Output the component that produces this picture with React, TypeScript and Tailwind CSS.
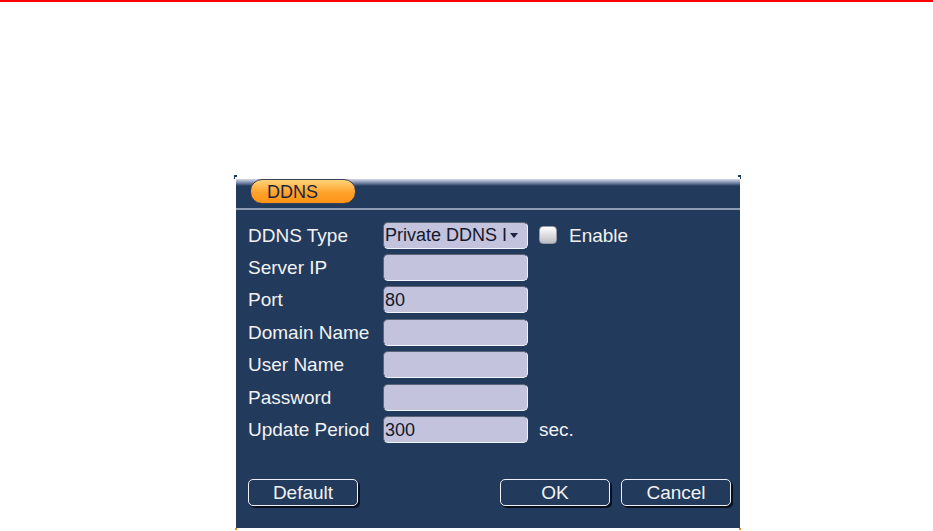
const rows = [
  { label: "DDNS Type", kind: "select", value: "Private DDNS I" },
  { label: "Server IP", kind: "input", value: "" },
  { label: "Port", kind: "input", value: "80" },
  { label: "Domain Name", kind: "input", value: "" },
  { label: "User Name", kind: "input", value: "" },
  { label: "Password", kind: "input", value: "" },
  { label: "Update Period", kind: "input", value: "300" },
];

function Field({ value, select }: { value: string; select?: boolean }) {
  return (
    <div className="flex h-[27px] w-[145px] items-center rounded-[5px] border border-b-[#f4f4fb] border-l-[#5e6478] border-r-[#f4f4fb] border-t-[#5e6478] bg-[#c3c3de] pl-[1px] text-[18px] leading-none text-[#14182a]">
      <span className="whitespace-nowrap">{value}</span>
      {select && (
        <svg width="10" height="8" viewBox="0 0 10 8" className="ml-[2px]">
          <path d="M1 2h8L5 7z" fill="#1b2340" />
        </svg>
      )}
    </div>
  );
}

function Btn({ label }: { label: string }) {
  return (
    <button className="flex h-[27px] w-[110px] items-center justify-center rounded-[5px] border border-[#eef0f6] text-[19px] leading-none text-[#f2f2f2] shadow-[1px_1px_0_#08101f,2px_2px_0_#08101f]">
      {label}
    </button>
  );
}

export default function App() {
  return (
    <div
      className="relative h-[531px] w-[933px] overflow-hidden border-t-2 border-[#ff0000] bg-white"
      style={{ fontFamily: '"Liberation Sans", Arial, sans-serif' }}
    >
      <div className="relative ml-[236px] mt-[177px] flex h-[349px] w-[504px] flex-col bg-[#223a5c]">
        {/* corner marks */}
        <span className="absolute -left-[2px] -top-[4px] h-[2px] w-[3px] bg-[#223a5c]" />
        <span className="absolute -left-[2px] -top-[4px] h-[4px] w-[1px] bg-[#223a5c]" />
        <span className="absolute -right-[1px] -top-[4px] h-[2px] w-[3px] bg-[#223a5c]" />
        <span className="absolute -right-[1px] -top-[4px] h-[4px] w-[1px] bg-[#223a5c]" />
        <span className="absolute -bottom-[2px] -left-[1px] h-[2px] w-[2px] bg-[#f08a10]" />
        <span className="absolute -bottom-[2px] -right-[1px] h-[2px] w-[2px] bg-[#f08a10]" />

        <div className="flex h-[29px] items-start bg-[linear-gradient(to_bottom,#d6d8ea_0px,#8f9cba_3px,#223a5c_7px)] pl-[14px]">
          <div className="flex h-[25px] w-[106px] items-center rounded-[12px] border border-[#3a3f55] bg-[linear-gradient(to_bottom,#ffd37a,#ffa22a_55%,#ff9416)] pl-[16px] text-[18px] leading-none text-[#1d2440]">
            DDNS
          </div>
        </div>
        <div className="h-[2px] bg-[#8e9db3]" />

        <div className="flex flex-col pl-[12px] pt-[9px] text-[19px] leading-none text-[#f2f2f2]">
          {rows.map((r) => (
            <div key={r.label} className="flex h-[32.4px] items-center">
              <span className="w-[135px] whitespace-nowrap">{r.label}</span>
              <Field value={r.value} select={r.kind === "select"} />
              {r.kind === "select" && (
                <>
                  <span className="ml-[11px] h-[18px] w-[18px] rounded-[4px] border border-[#9a9aa6] bg-[linear-gradient(to_bottom,#ffffff,#bdbdc4)]" />
                  <span className="ml-[12px]">Enable</span>
                </>
              )}
              {r.label === "Update Period" && <span className="ml-[11px]">sec.</span>}
            </div>
          ))}
        </div>

        <div className="mt-[33px] flex items-center pl-[12px] pr-[9px]">
          <Btn label="Default" />
          <div className="flex-1" />
          <Btn label="OK" />
          <div className="w-[11px]" />
          <Btn label="Cancel" />
        </div>
      </div>
    </div>
  );
}
